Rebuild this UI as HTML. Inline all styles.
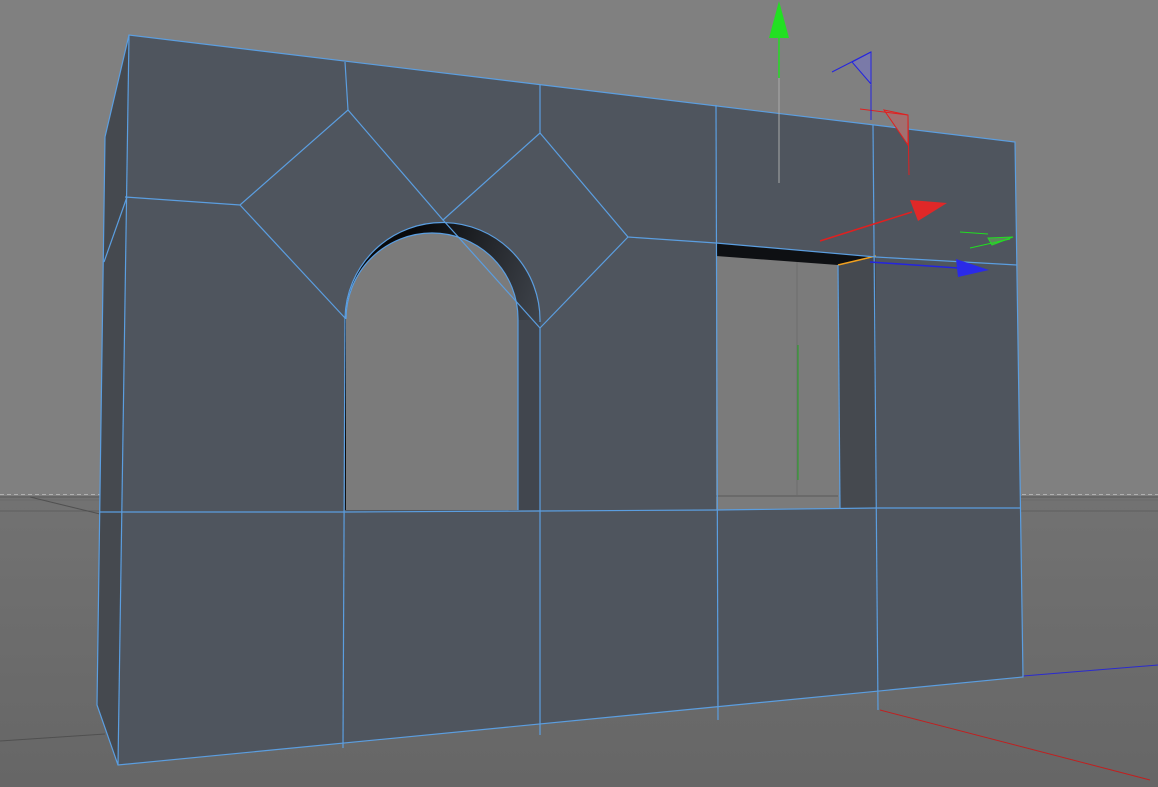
<!DOCTYPE html>
<html><head><style>html,body{margin:0;padding:0;background:#808080;overflow:hidden}svg{display:block}</style></head>
<body>
<svg width="1158" height="787" viewBox="0 0 1158 787" xmlns="http://www.w3.org/2000/svg">
<defs>
<linearGradient id="gnd" x1="0" y1="0" x2="0" y2="1"><stop offset="0" stop-color="#727272"/><stop offset="1" stop-color="#666"/></linearGradient>
<linearGradient id="rev" x1="0" y1="0" x2="1" y2="0.5"><stop offset="0.3" stop-color="#08090b"/><stop offset="1" stop-color="#454a52"/></linearGradient>
</defs>
<rect width="1158" height="787" fill="#808080"/>
<rect y="496" width="1158" height="291" fill="url(#gnd)"/>
<line x1="0" y1="494.5" x2="1158" y2="494.5" stroke="#b0b0b0" stroke-width="1" stroke-dasharray="4 3"/>
<line x1="0" y1="497" x2="1158" y2="497" stroke="#5a5a5a"/>
<line x1="0" y1="500" x2="1158" y2="500" stroke="#6a6a6a"/>
<line x1="0" y1="511" x2="1158" y2="511" stroke="#5e5e5e"/>
<line x1="30" y1="497" x2="100" y2="514" stroke="#505050"/>
<line x1="0" y1="741" x2="105" y2="734" stroke="#505050"/>
<line x1="1023" y1="676" x2="1158" y2="665" stroke="#2a2ad0"/>
<line x1="880" y1="710" x2="1150" y2="780" stroke="#c02020"/>
<polygon points="129,35 105,137 97,705 118,765 124,765 129,35" fill="#45494f"/>
<polygon points="129,35 1015,142 1023,677 118,765" fill="#4f555e"/>
<path d="M345,510 L345,318 A97,97 0 0 1 540,322 L540,510 Z" fill="url(#rev)"/>
<rect x="517" y="320" width="23" height="190" fill="#41464e"/>
<path d="M346,510 L346,319 A86,86 0 0 1 518,319 L518,510 Z" fill="#7b7b7b"/>
<polygon points="716,243 876,257 876,508 716,510" fill="#7b7b7b"/>
<polygon points="838,262 876,257 876,508 840,508" fill="#45494f"/>
<polygon points="716,243 876,257 838,265 716,256" fill="#0e1013"/>
<line x1="716" y1="496" x2="838" y2="496" stroke="#5a5a5a"/>
<line x1="797" y1="262" x2="797" y2="495" stroke="#6c6c6c"/>
<line x1="798" y1="345" x2="798" y2="480" stroke="#22aa22"/>
<line x1="838" y1="265" x2="876" y2="256" stroke="#f0a020" stroke-width="1.5"/>
<g stroke="#5b9ee0" stroke-width="1.2" fill="none">
<polyline points="105,137 129,35 1015,142 1023,677 118,765 97,705 105,137"/>
<line x1="129" y1="35" x2="118" y2="765"/>
<polyline points="100,512 345,512 540,511 716,510 876,508 1020,508"/>
<polyline points="125,197 240,205 348,110 443,220 540,133 628,237 716,243 876,257 1017,265"/>
<polyline points="240,205 345,318"/>
<polyline points="443,220 540,328"/>
<line x1="540" y1="328" x2="628" y2="237"/>
<line x1="345" y1="62" x2="348" y2="110"/>
<line x1="540" y1="85" x2="540" y2="133"/>
<line x1="345" y1="318" x2="343" y2="748"/>
<line x1="540" y1="328" x2="540" y2="735"/>
<line x1="716" y1="105" x2="718" y2="720"/>
<line x1="873" y1="125" x2="878" y2="710"/>
<path d="M345,318 A97,97 0 0 1 540,322"/>
<path d="M346,319 A86,86 0 0 1 518,319"/>
<line x1="518" y1="319" x2="518" y2="510"/>
<line x1="838" y1="265" x2="840" y2="508"/>
<line x1="127" y1="197" x2="104" y2="262"/>
</g>
<line x1="779" y1="75" x2="779" y2="183" stroke="#aaa"/>
<line x1="779" y1="38" x2="779" y2="78" stroke="#22dd22" stroke-width="1.5"/>
<polygon points="779,1 769,38 789,38" fill="#22e022"/>
<line x1="832" y1="72" x2="871" y2="52" stroke="#2424e0"/>
<polygon points="852,62 871,52 871,84" fill="#7a7aa8" stroke="#2424e0"/>
<polygon points="884,110 908,115 908,145" fill="#a07070" stroke="#e02020"/>
<line x1="860" y1="109" x2="908" y2="115" stroke="#e02020"/>
<line x1="908" y1="115" x2="909" y2="175" stroke="#e02020"/>
<line x1="871" y1="85" x2="871" y2="120" stroke="#2424e0"/>
<line x1="820" y1="241" x2="912" y2="212" stroke="#e02020" stroke-width="1.5"/>
<polygon points="910,200 947,203 918,221" fill="#e02828"/>
<line x1="870" y1="262" x2="958" y2="268" stroke="#2424e0" stroke-width="1.5"/>
<polygon points="956,259 989,270 958,277" fill="#2a2ae8"/>
<polygon points="988,238 1013,237 992,245" fill="#5a8a5a" stroke="#22dd22"/>
<line x1="960" y1="232" x2="988" y2="234" stroke="#22dd22"/>
<line x1="970" y1="248" x2="1010" y2="239" stroke="#22dd22"/>
</svg>
</body></html>
